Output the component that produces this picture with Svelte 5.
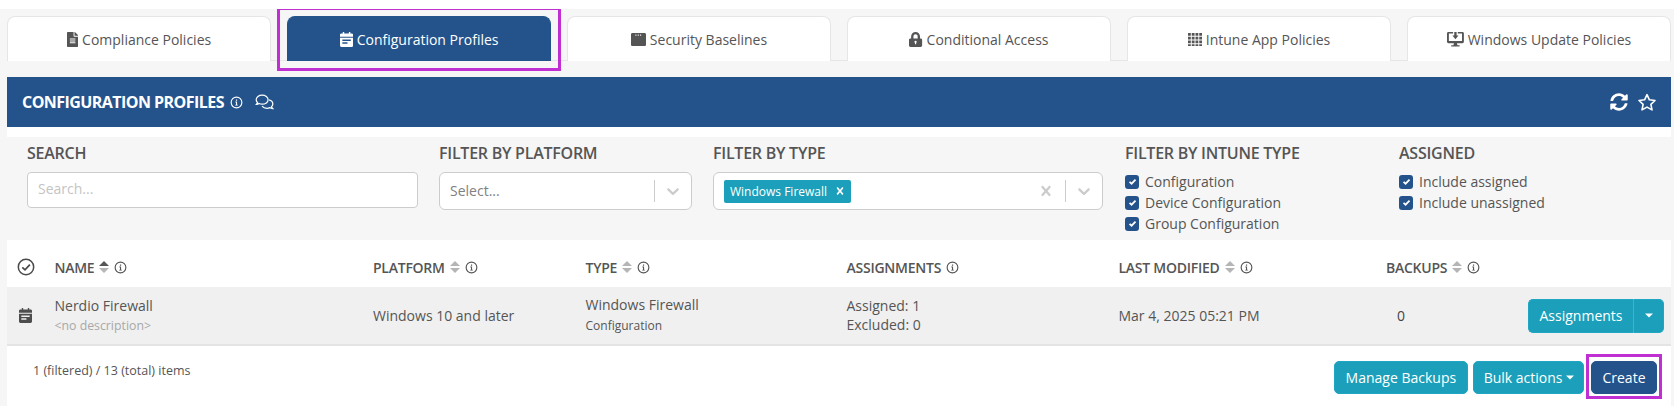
<script>
  const filePath = "M224 136V0H24C10.7 0 0 10.7 0 24v464c0 13.3 10.7 24 24 24h336c13.3 0 24-10.7 24-24V160H248c-13.2 0-24-10.8-24-24zm64 236c0 6.6-5.4 12-12 12H108c-6.6 0-12-5.4-12-12v-8c0-6.6 5.4-12 12-12h168c6.6 0 12 5.4 12 12v8zm0-64c0 6.6-5.4 12-12 12H108c-6.6 0-12-5.4-12-12v-8c0-6.6 5.4-12 12-12h168c6.6 0 12 5.4 12 12v8zm0-72v8c0 6.6-5.4 12-12 12H108c-6.6 0-12-5.4-12-12v-8c0-6.6 5.4-12 12-12h168c6.6 0 12 5.4 12 12zm96-114.1v6.1H256V0h6.1c6.4 0 12.5 2.5 17 7l97.9 98c4.5 4.5 7 10.6 7 16.9z";
  const calPath = "M96 0h48v48h160V0h48v48h48c26.5 0 48 21.5 48 48v64H0V96c0-26.500 21.500-48 48-48h48zM0 192h448v272c0 26.500-21.500 48-48 48H48c-26.500 0-48-21.500-48-48zm80 64v48h288v-48zm0 96v48h176v-48z";
  const winPath = "M464 32H48C21.500 32 0 53.500 0 80v352c0 26.500 21.500 48 48 48h416c26.500 0 48-21.500 48-48V80c0-26.500-21.500-48-48-48zM150 88h36v36h-36zm80 0h36v36h-36zm80 0h36v36h-36z";
  const lockPath = "M400 224h-24v-72C376 68.200 307.800 0 224 0S72 68.200 72 152v72H48c-26.500 0-48 21.500-48 48v192c0 26.500 21.500 48 48 48h352c26.500 0 48-21.500 48-48V272c0-26.500-21.500-48-48-48zm-104 0H152v-72c0-39.700 32.300-72 72-72s72 32.300 72 72v72zM224 296a40 40 0 0 0-20 74.600V416h40v-45.400A40 40 0 0 0 224 296z";
  const gridPath = "M0 32h96v96H0zm128 0h96v96h-96zm128 0h96v96h-96zm128 0h96v96h-96zM0 160h96v96H0zm128 0h96v96h-96zm128 0h96v96h-96zm128 0h96v96h-96zM0 288h96v96H0zm128 0h96v96h-96zm128 0h96v96h-96zm128 0h96v96h-96zM0 416h96v64H0zm128 0h96v64h-96zm128 0h96v64h-96zm128 0h96v64h-96z";
  const monPath = "M48 0h160v48H64v256h448V48H368V0h160c26.500 0 48 21.500 48 48v288c0 26.500-21.500 48-48 48H340l16 64h60c13 0 24 11 24 24s-11 24-24 24H160c-13 0-24-11-24-24s11-24 24-24h60l16-64H48c-26.500 0-48-21.500-48-48V48C0 21.500 21.500 0 48 0zM248 0h80v120h64L288 250 184 120h64z";

  const tabs = [
    { label: "Compliance Policies", vb: "0 0 384 512", d: filePath },
    { label: "Configuration Profiles", vb: "0 0 448 512", d: calPath, active: true },
    { label: "Security Baselines", vb: "0 0 512 512", d: winPath },
    { label: "Conditional Access", vb: "0 0 448 512", d: lockPath },
    { label: "Intune App Policies", vb: "0 0 480 512", d: gridPath },
    { label: "Windows Update Policies", vb: "0 0 576 512", d: monPath },
  ];
  const columns = [
    { label: "NAME", sort: "asc" },
    { label: "PLATFORM", sort: "none" },
    { label: "TYPE", sort: "none" },
    { label: "ASSIGNMENTS" },
    { label: "LAST MODIFIED", sort: "none" },
    { label: "BACKUPS", sort: "none" },
  ];
  const intuneTypes = ["Configuration", "Device Configuration", "Group Configuration"];
  const assigned = ["Include assigned", "Include unassigned"];
  const chevron = "M4.516 7.548c0.436-0.446 1.043-0.481 1.576 0l3.908 3.747 3.908-3.747c0.533-0.481 1.141-0.446 1.574 0 0.436 0.445 0.408 1.197 0 1.615-0.406 0.418-4.695 4.502-4.695 4.502-0.217 0.223-0.502 0.335-0.787 0.335s-0.57-0.112-0.789-0.335c0 0-4.287-4.084-4.695-4.502s-0.436-1.17 0-1.615z";
  const cross = "M14.348 14.849c-0.469 0.469-1.229 0.469-1.697 0l-2.651-3.030-2.651 3.029c-0.469 0.469-1.229 0.469-1.697 0-0.469-0.469-0.469-1.229 0-1.697l2.758-3.15-2.759-3.152c-0.469-0.469-0.469-1.228 0-1.697s1.228-0.469 1.697 0l2.652 3.031 2.651-3.031c0.469-0.469 1.228-0.469 1.697 0s0.469 1.229 0 1.697l-2.758 3.152 2.758 3.15c0.469 0.469 0.469 1.229 0 1.698z";
</script>

{#snippet info()}
  <svg class="info" viewBox="0 0 16 16" aria-hidden="true">
    <circle cx="8" cy="8" r="6.6" fill="none" stroke="currentColor" stroke-width="1.4" />
    <path d="M6.600 6.900h2.100v3.800h1v1.100H6.400v-1.100h1v-2.700h-.8zM7.300 4.200h1.500v1.600H7.300z" fill="currentColor" />
  </svg>
{/snippet}

{#snippet checkbox(text)}
  <label class="check">
    <span class="box">
      <svg viewBox="0 0 12 12" aria-hidden="true"><path d="M2.800 6.300 5 8.400 9.300 3.900" fill="none" stroke="#fff" stroke-width="1.900" /></svg>
    </span>
    <span>{text}</span>
  </label>
{/snippet}

{#snippet caret()}
  <svg class="caret" viewBox="0 0 8 5" aria-hidden="true"><path d="M0 .5h8L4 4.500z" fill="#fff" /></svg>
{/snippet}

<div class="page">
  <nav class="tabs">
    {#each tabs as t}
      <div class="tab" class:active={t.active}>
        <svg class="tab-icon" viewBox={t.vb} aria-hidden="true"><path d={t.d} fill="currentColor" fill-rule="evenodd" /></svg>
        <span>{t.label}</span>
      </div>
    {/each}
  </nav>

  <main class="card">
    <header class="head">
      <div class="head-left">
        <h1>CONFIGURATION PROFILES</h1>
        {@render info()}
        <svg class="comments" viewBox="0 0 20 18" aria-hidden="true">
          <path d="M7.500 1.200C4 1.200 1.200 3.300 1.200 6c0 1.200.5 2.200 1.400 3-.2.800-.7 1.500-1.200 2 1.100 0 2.100-.4 2.800-1 1 .5 2.100.8 3.300.8 3.500 0 6.300-2.100 6.300-4.800S11 1.200 7.500 1.200z" fill="none" stroke="#fff" stroke-width="1.300" />
          <path d="M14.800 6.200c2.300.6 4 2.300 4 4.300 0 1.100-.5 2.100-1.400 2.900.2.800.7 1.500 1.200 2-1.100 0-2.100-.4-2.800-1-1 .5-2 .7-3.100.7-2.300 0-4.200-.9-5.300-2.300" fill="none" stroke="#fff" stroke-width="1.300" />
        </svg>
      </div>
      <div class="head-right">
        <svg viewBox="0 0 512 512" class="sync" aria-hidden="true"><path fill="#fff" d="M370.720 133.280C339.458 104.008 298.888 87.962 255.848 88c-77.458.068-144.328 53.178-162.791 126.850-1.344 5.363-6.122 9.150-11.651 9.150H24.103c-7.498 0-13.194-6.807-11.807-14.176C33.933 94.924 134.813 8 256 8c66.448 0 126.791 26.136 171.315 68.685L463.030 40.970C478.149 25.851 504 36.559 504 57.941V192c0 13.255-10.745 24-24 24H345.941c-21.382 0-32.090-25.851-16.971-40.971l41.750-41.749zM32 296h134.059c21.382 0 32.090 25.851 16.971 40.971l-41.750 41.750c31.262 29.273 71.835 45.319 114.876 45.280 77.418-.07 144.315-53.144 162.787-126.849 1.344-5.363 6.122-9.150 11.651-9.150h57.304c7.498 0 13.194 6.807 11.807 14.176C478.067 417.076 377.187 504 256 504c-66.448 0-126.791-26.136-171.315-68.685L48.970 471.030C33.851 486.149 8 475.441 8 454.059V320c0-13.255 10.745-24 24-24z" /></svg>
        <svg viewBox="0 0 20 19" class="star" aria-hidden="true"><path d="M10 1.700 12.400 6.800 18 7.500 13.900 11.300 15 16.900 10 14.100 5 16.900 6.100 11.300 2 7.500 7.600 6.800z" fill="none" stroke="#fff" stroke-width="1.600" stroke-linejoin="round" /></svg>
      </div>
    </header>

    <section class="filters">
      <div class="f-search">
        <h2>SEARCH</h2>
        <input class="search" type="text" placeholder="Search..." />
      </div>
      <div class="f-platform">
        <h2>FILTER BY PLATFORM</h2>
        <div class="select">
          <span class="placeholder">Select...</span>
          <div class="indicators">
            <span class="sep"></span>
            <svg viewBox="0 0 20 20" aria-hidden="true"><path d={chevron} /></svg>
          </div>
        </div>
      </div>
      <div class="f-type">
        <h2>FILTER BY TYPE</h2>
        <div class="select">
          <span class="tag">Windows Firewall
            <svg viewBox="0 0 20 20" aria-hidden="true"><path d={cross} fill="#fff" /></svg>
          </span>
          <div class="indicators">
            <svg viewBox="0 0 20 20" aria-hidden="true"><path d={cross} /></svg>
            <span class="sep"></span>
            <svg viewBox="0 0 20 20" aria-hidden="true"><path d={chevron} /></svg>
          </div>
        </div>
      </div>
      <div class="f-intune">
        <h2>FILTER BY INTUNE TYPE</h2>
        <div class="checks">
          {#each intuneTypes as t}{@render checkbox(t)}{/each}
        </div>
      </div>
      <div class="f-assigned">
        <h2>ASSIGNED</h2>
        <div class="checks">
          {#each assigned as t}{@render checkbox(t)}{/each}
        </div>
      </div>
    </section>

    <section class="table">
      <div class="row head-row">
        <div class="cell-icon">
          <svg class="all" viewBox="0 0 18 18" aria-hidden="true">
            <circle cx="9" cy="9" r="7.700" fill="none" stroke="#4a4a4a" stroke-width="1.500" />
            <path d="M5.300 9.300 8 11.900 12.900 6.600" fill="none" stroke="#4a4a4a" stroke-width="1.700" />
          </svg>
        </div>
        {#each columns as c}
          <div class="th">
            <span>{c.label}</span>
            {#if c.sort}
              <svg class="sort" viewBox="0 0 10 12" aria-hidden="true">
                <path d="M5 0 10 5H0z" fill={c.sort === "asc" ? "#555" : "#b5b5b5"} />
                <path d="M5 12 0 7h10z" fill="#b5b5b5" />
              </svg>
            {/if}
            {@render info()}
          </div>
        {/each}
        <div></div>
      </div>

      <div class="row data-row">
        <div class="cell-icon">
          <svg class="row-icon" viewBox="0 0 448 512" aria-hidden="true"><path d={calPath} fill="#4d4d4d" fill-rule="evenodd" /></svg>
        </div>
        <div class="stack name">
          <span>Nerdio Firewall</span>
          <small class="muted">&lt;no description&gt;</small>
        </div>
        <div>Windows 10 and later</div>
        <div class="stack type">
          <span>Windows Firewall</span>
          <small>Configuration</small>
        </div>
        <div class="stack assign">
          <span>Assigned: 1</span>
          <span>Excluded: 0</span>
        </div>
        <div>Mar 4, 2025 05:21 PM</div>
        <div class="backups">0</div>
        <div class="actions">
          <div class="split">
            <button class="btn main-part">Assignments</button>
            <button class="btn caret-part">{@render caret()}</button>
          </div>
        </div>
      </div>
    </section>

    <footer class="foot">
      <span class="count">1 (filtered) / 13 (total) items</span>
      <div class="foot-btns">
        <button class="btn manage">Manage Backups</button>
        <button class="btn bulk">Bulk actions{@render caret()}</button>
        <button class="btn create">Create</button>
      </div>
    </footer>
  </main>
</div>

<style>
  :global(body) {
    margin: 0;
    background: #fff;
  }
  .page {
    box-sizing: border-box;
    margin-top: 9px;
    height: 397px;
    overflow: hidden;
    padding: 7px 3px 0 7px;
    background: #f6f6f6;
    font-family: "Open Sans", "Noto Sans", sans-serif;
    font-size: 14px;
    color: #555;
    display: flex;
    flex-direction: column;
  }
  .tabs {
    display: flex;
    gap: 16px;
    height: 45px;
    flex: none;
    border-bottom: 1px solid #e6e6e6;
    box-sizing: border-box;
  }
  .tab {
    box-sizing: border-box;
    width: 264px;
    height: 45px;
    display: flex;
    align-items: center;
    justify-content: center;
    gap: 4px;
    background: #fff;
    border: 1px solid #e6e6e6;
    border-bottom: 0;
    border-radius: 8px 8px 0 0;
    color: #555;
    position: relative;
  }
  .tab.active {
    background: #24538c;
    border-color: #24538c;
    color: #fff;
  }
  .tab.active::after {
    content: "";
    position: absolute;
    inset: -10px -11px -10px -11px;
    border: 3px solid #c02fd2;
  }
  .tab-icon {
    height: 15px;
    width: auto;
  }
  .card {
    margin-top: 16px;
    background: #fff;
    flex: 1;
  }
  .head {
    height: 50px;
    background: #24538c;
    color: #fff;
    display: flex;
    align-items: center;
    justify-content: space-between;
    padding: 0 14px 0 15px;
  }
  .head-left {
    display: flex;
    align-items: center;
  }
  h1 {
    margin: 0 6px 0 0;
    font-size: 16px;
    font-weight: 700;
    letter-spacing: -0.55px;
  }
  .info {
    width: 13px;
    height: 13px;
    flex: none;
  }
  .comments {
    width: 19px;
    height: 17px;
    margin-left: 12px;
  }
  .head-right {
    display: flex;
    align-items: center;
    gap: 9px;
  }
  .sync { width: 18px; height: 18px; }
  .star { width: 20px; height: 19px; }
  .filters {
    margin-top: 10px;
    height: 103px;
    box-sizing: border-box;
    background: #f6f6f6;
    display: flex;
    padding: 6px 0 0 20px;
  }
  h2 {
    margin: 0 0 9px;
    font-size: 16px;
    line-height: 20px;
    font-weight: 600;
    letter-spacing: -0.25px;
    color: #555;
  }
  .f-search { width: 391px; margin-right: 21px; }
  .f-platform { width: 253px; margin-right: 21px; }
  .f-type { width: 390px; margin-right: 22px; }
  .f-intune { width: 274px; }
  .search {
    box-sizing: border-box;
    display: block;
    width: 100%;
    height: 36px;
    padding: 0 10px 3px;
    border: 1px solid #ccc;
    border-radius: 4px;
    background: #fff;
    font: inherit;
    font-size: 14px;
  }
  .search::placeholder { color: #c4c4c4; }
  .select {
    box-sizing: border-box;
    height: 38px;
    display: flex;
    align-items: center;
    justify-content: space-between;
    padding: 0 8px 0 10px;
    background: #fff;
    border: 1px solid #ccc;
    border-radius: 6px;
  }
  .placeholder { color: #808080; font-size: 14px; padding-bottom: 2px; }
  .indicators {
    display: flex;
    align-items: center;
    gap: 8.500px;
  }
  .indicators svg {
    width: 20px;
    height: 20px;
    fill: #ccc;
  }
  .sep {
    width: 1px;
    height: 22px;
    background: #ccc;
  }
  .tag {
    box-sizing: border-box;
    height: 23px;
    width: 127px;
    display: flex;
    align-items: center;
    justify-content: space-between;
    padding: 0 4px 0 6px;
    background: #1b9fba;
    color: #fff;
    border-radius: 2px;
    font-size: 12px;
  }
  .tag svg { width: 14px; height: 14px; }
  .checks {
    display: flex;
    flex-direction: column;
    margin-top: -1px;
  }
  .check {
    display: flex;
    align-items: center;
    gap: 6px;
    height: 21px;
    font-size: 14px;
  }
  .box {
    box-sizing: border-box;
    width: 14px;
    height: 14px;
    border-radius: 3px;
    background: #24538c;
    display: grid;
    place-items: center;
  }
  .box svg { width: 11px; height: 11px; }
  .row {
    display: grid;
    grid-template-columns: 47.500px 318.500px 212.500px 261px 272px 267.500px 141px 144px;
    align-items: center;
  }
  .head-row {
    height: 47px;
    box-sizing: border-box;
    padding-top: 7px;
    font-size: 14px;
    font-weight: 600;
    letter-spacing: -0.25px;
  }
  .cell-icon { display: flex; justify-content: center; padding-right: 10px; }
  .all { width: 18px; height: 18px; }
  .th { display: flex; align-items: center; gap: 5px; }
  .sort { width: 10px; height: 12px; }
  .head-row .info { color: #555; }
  .data-row {
    height: 59px;
    box-sizing: border-box;
    background: #f0f0f0;
    border-bottom: 2px solid #e4e4e4;
  }
  .row-icon { width: 13px; height: 15px; }
  .stack { display: flex; flex-direction: column; }
  .stack span, .stack small { display: block; }
  .name { gap: 1px; }
  .name span { line-height: 20px; }
  .name small { font-size: 12.300px; }
  small { font-size: 12px; line-height: 18px; }
  .muted { color: #a8a8a8; }
  .type span { line-height: 20px; margin-top: -1px; }
  .type small { margin-top: 2px; }
  .assign span { line-height: 20px; margin-top: -1px; }
  .backups { padding-left: 11px; color: #444; }
  .actions { display: flex; justify-content: flex-end; padding-right: 7px; }
  .btn {
    height: 33px;
    padding: 0 10.500px;
    border: 1px solid #1ea6c2;
    border-radius: 5px;
    background: #1b9fba;
    color: #fff;
    font: inherit;
    font-size: 14px;
    display: inline-flex;
    align-items: center;
  }
  .split { display: flex; }
  .main-part {
    border-radius: 5px 0 0 5px;
    height: 34px;
    width: 106px;
    justify-content: center;
    border-right-color: #3db3cb;
  }
  .caret-part {
    border-radius: 0 5px 5px 0;
    height: 34px;
    width: 30px;
    border-left: 0;
    justify-content: center;
    padding: 0;
  }
  .caret { width: 8px; height: 5px; margin-left: 3px; }
  .caret-part .caret { margin: 0; }
  .foot {
    display: flex;
    justify-content: space-between;
    padding: 15px 14px 0 26px;
  }
  .count { font-size: 12.500px; line-height: 20px; }
  .foot-btns { display: flex; gap: 5px; }
  .manage { padding: 0 11px; }
  .bulk { margin-right: 2px; padding: 0 9.500px; }
  .create {
    background: #24538c;
    border-color: #24538c;
    width: 66px;
    justify-content: center;
    padding: 0;
    position: relative;
  }
  .create::after {
    content: "";
    position: absolute;
    inset: -8px -6px -6px -6px;
    border: 3px solid #c02fd2;
  }
</style>
